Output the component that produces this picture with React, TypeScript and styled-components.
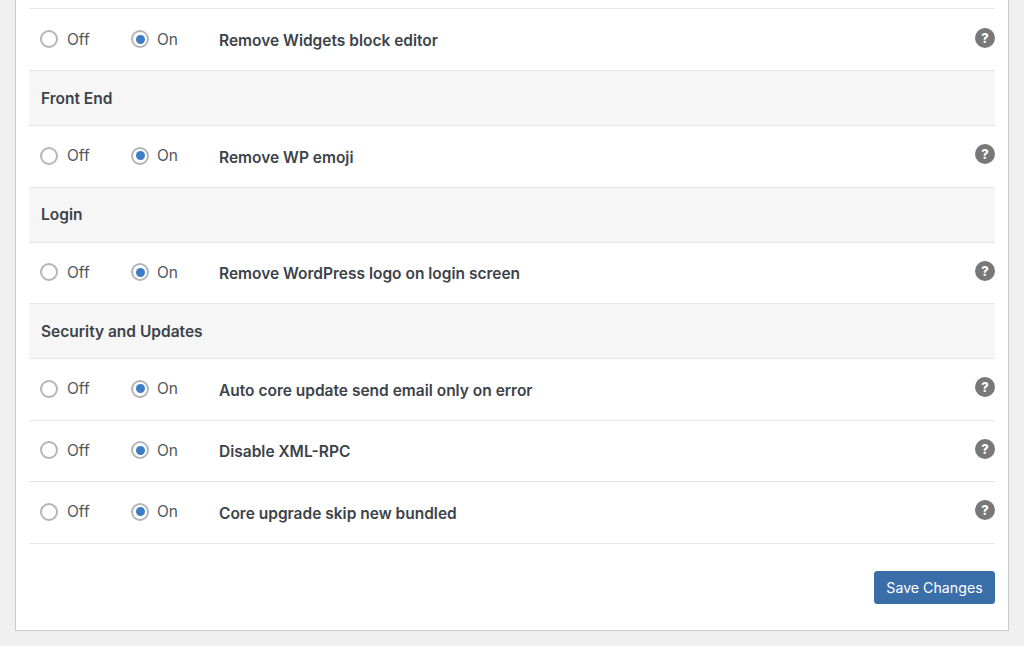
import React from 'react';
import styled, { createGlobalStyle } from 'styled-components';

const GlobalStyle = createGlobalStyle`
  html, body {
    margin: 0;
    padding: 0;
    background: #f0f0f0;
    height: 646px;
    overflow: hidden;
  }
`;

const Page = styled.div`
  padding: 0 15px;
  font-family: Inter, "Open Sans", sans-serif;
  color: #3c434a;
`;

const Panel = styled.div`
  box-sizing: border-box;
  width: 994px;
  height: 631px;
  background: #fff;
  border: 1px solid #cbcbcd;
  border-top: none;
  padding: 8px 13px 0;
`;

const Table = styled.div`
  border-top: 1px solid #e6e6e7;
  padding-top: 0.5px;
`;

const Row = styled.div`
  box-sizing: border-box;
  height: 61.5px;
  display: flex;
  align-items: center;
  padding: 2px 0 0 11px;
  border-bottom: 1px solid #e6e6e7;
`;

const Heading = styled.div`
  box-sizing: border-box;
  height: 55px;
  display: flex;
  align-items: center;
  padding: 0 12px;
  background: #f6f6f6;
  border-bottom: 1px solid #e6e6e7;
  font-size: 15.5px;
  font-weight: 600;
`;

const RadioOption = styled.label<{ $width: number; $gap: number }>`
  display: flex;
  align-items: center;
  gap: ${p => p.$gap}px;
  width: ${p => p.$width}px;
  margin-bottom: 3px;
  font-size: 15.5px;
  color: #50575e;
`;

const RadioDot = styled.span<{ $checked?: boolean }>`
  box-sizing: border-box;
  width: 18px;
  height: 18px;
  flex: none;
  border-radius: 50%;
  border: 2px solid #b4b5b7;
  background: #fff;
  display: flex;
  align-items: center;
  justify-content: center;

  &::after {
    content: '';
    display: ${p => (p.$checked ? 'block' : 'none')};
    width: 9px;
    height: 9px;
    border-radius: 50%;
    background: #3f7cc6;
  }
`;

const Label = styled.span`
  flex: 1;
  font-size: 15.5px;
  font-weight: 600;
`;

const HelpIcon = styled.span`
  width: 20px;
  height: 20px;
  margin-bottom: 6px;
  border-radius: 50%;
  background: #787878;
  color: #fff;
  font-size: 13px;
  font-weight: 800;
  line-height: 20px;
  text-align: center;
`;

const Footer = styled.div`
  display: flex;
  justify-content: flex-end;
  padding-top: 27px;
`;

const SaveButton = styled.button`
  width: 121px;
  height: 33px;
  padding: 0;
  border: 1px solid #3a6ea9;
  border-radius: 3px;
  background: #3a6ea9;
  color: #fff;
  font-family: inherit;
  font-size: 14.2px;
`;

type Item = { heading: string } | { label: string };

const items: Item[] = [
  { label: 'Remove Widgets block editor' },
  { heading: 'Front End' },
  { label: 'Remove WP emoji' },
  { heading: 'Login' },
  { label: 'Remove WordPress logo on login screen' },
  { heading: 'Security and Updates' },
  { label: 'Auto core update send email only on error' },
  { label: 'Disable XML-RPC' },
  { label: 'Core upgrade skip new bundled' },
];

export default function App() {
  return (
    <Page>
      <GlobalStyle />
      <Panel>
        <Table>
          {items.map(item =>
            'heading' in item ? (
              <Heading key={item.heading}>{item.heading}</Heading>
            ) : (
              <Row key={item.label}>
                <RadioOption $width={91} $gap={9}>
                  <RadioDot />
                  Off
                </RadioOption>
                <RadioOption $width={88} $gap={8}>
                  <RadioDot $checked />
                  On
                </RadioOption>
                <Label>{item.label}</Label>
                <HelpIcon>?</HelpIcon>
              </Row>
            )
          )}
        </Table>
        <Footer>
          <SaveButton>Save Changes</SaveButton>
        </Footer>
      </Panel>
    </Page>
  );
}
